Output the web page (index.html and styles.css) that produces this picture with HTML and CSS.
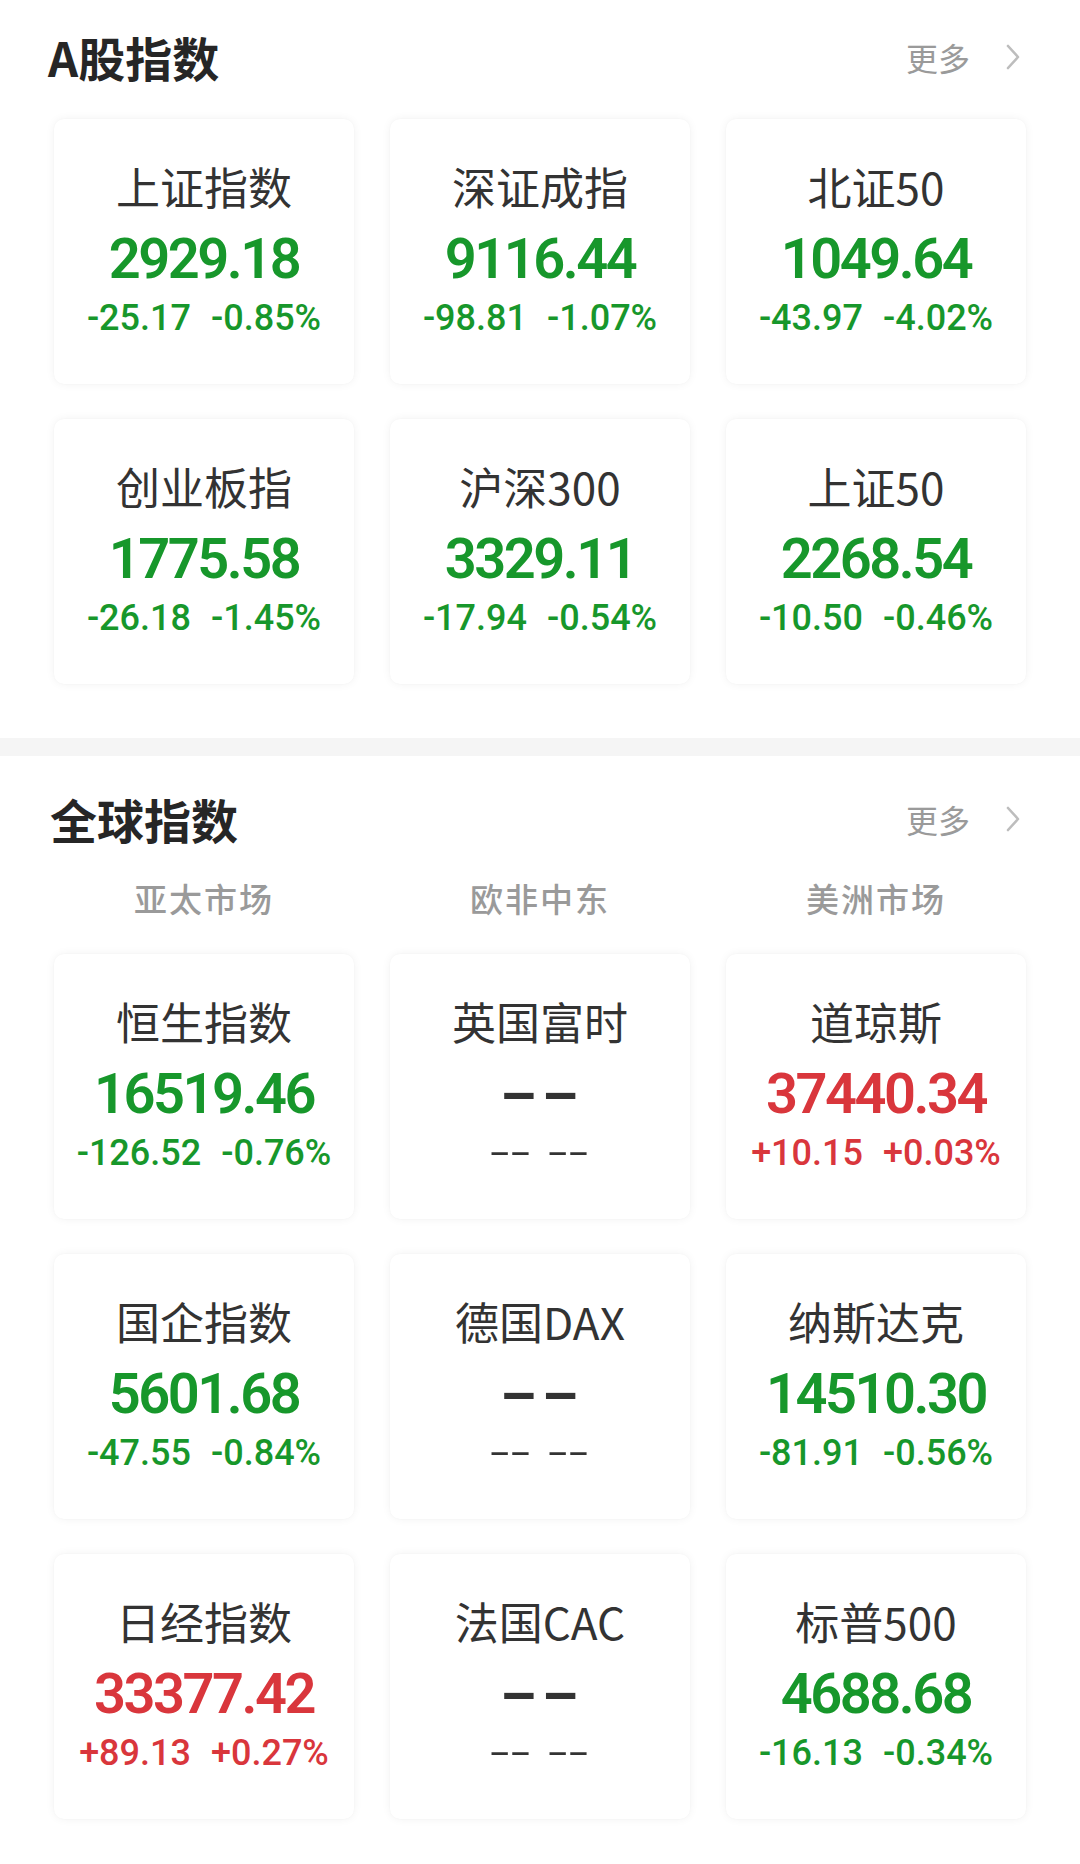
FILE: index.html
```html
<!DOCTYPE html>
<html lang="zh-CN">
<head>
<meta charset="utf-8">
<title>指数</title>
<link rel="stylesheet" href="styles.css">
</head>
<body>
<div class="page">
  <section class="section section-a">
    <div class="head">
      <h2 class="title">A股指数</h2>
      <div class="more"><span>更多</span><svg class="chev" width="14" height="26" viewBox="0 0 14 26"><polyline points="2,2 12,13 2,24" fill="none" stroke="#bdbdbd" stroke-width="2.6" stroke-linecap="round" stroke-linejoin="round"/></svg></div>
    </div>
    <div class="grid">
      <div class="card"><div class="name">上证指数</div><div class="num down">2929.18</div><div class="chg down"><span>-25.17</span><span>-0.85%</span></div></div>
      <div class="card"><div class="name">深证成指</div><div class="num down">9116.44</div><div class="chg down"><span>-98.81</span><span>-1.07%</span></div></div>
      <div class="card"><div class="name">北证50</div><div class="num down">1049.64</div><div class="chg down"><span>-43.97</span><span>-4.02%</span></div></div>
      <div class="card"><div class="name">创业板指</div><div class="num down">1775.58</div><div class="chg down"><span>-26.18</span><span>-1.45%</span></div></div>
      <div class="card"><div class="name">沪深300</div><div class="num down">3329.11</div><div class="chg down"><span>-17.94</span><span>-0.54%</span></div></div>
      <div class="card"><div class="name">上证50</div><div class="num down">2268.54</div><div class="chg down"><span>-10.50</span><span>-0.46%</span></div></div>
    </div>
  </section>
  <div class="sep"></div>
  <section class="section section-b">
    <div class="head">
      <h2 class="title">全球指数</h2>
      <div class="more"><span>更多</span><svg class="chev" width="14" height="26" viewBox="0 0 14 26"><polyline points="2,2 12,13 2,24" fill="none" stroke="#bdbdbd" stroke-width="2.6" stroke-linecap="round" stroke-linejoin="round"/></svg></div>
    </div>
    <div class="tabs">
      <div class="tab">亚太市场</div>
      <div class="tab">欧非中东</div>
      <div class="tab">美洲市场</div>
    </div>
    <div class="grid">
      <div class="card"><div class="name">恒生指数</div><div class="num down">16519.46</div><div class="chg down"><span>-126.52</span><span>-0.76%</span></div></div>
      <div class="card"><div class="name">英国富时</div><div class="num none"><span class="dash-big">--</span></div><div class="chg none"><span class="dash-small">--</span><span class="dash-small">--</span></div></div>
      <div class="card"><div class="name">道琼斯</div><div class="num up">37440.34</div><div class="chg up"><span>+10.15</span><span>+0.03%</span></div></div>
      <div class="card"><div class="name">国企指数</div><div class="num down">5601.68</div><div class="chg down"><span>-47.55</span><span>-0.84%</span></div></div>
      <div class="card"><div class="name">德国DAX</div><div class="num none"><span class="dash-big">--</span></div><div class="chg none"><span class="dash-small">--</span><span class="dash-small">--</span></div></div>
      <div class="card"><div class="name">纳斯达克</div><div class="num down">14510.30</div><div class="chg down"><span>-81.91</span><span>-0.56%</span></div></div>
      <div class="card"><div class="name">日经指数</div><div class="num up">33377.42</div><div class="chg up"><span>+89.13</span><span>+0.27%</span></div></div>
      <div class="card"><div class="name">法国CAC</div><div class="num none"><span class="dash-big">--</span></div><div class="chg none"><span class="dash-small">--</span><span class="dash-small">--</span></div></div>
      <div class="card"><div class="name">标普500</div><div class="num down">4688.68</div><div class="chg down"><span>-16.13</span><span>-0.34%</span></div></div>
    </div>
  </section>
</div>
</body>
</html>
```

FILE: styles.css
```css
* { box-sizing: border-box; }
html, body {
  margin: 0;
  padding: 0;
  background: #ffffff;
}
body {
  font-family: "Noto Sans CJK SC", "Noto Sans", sans-serif;
  color: #333333;
  width: 1080px;
  height: 1864px;
  overflow: hidden;
}
.page {
  display: flex;
  flex-direction: column;
}
.section-a {
  padding: 27px 54px 54px 54px;
}
.section-b {
  padding: 33px 54px 0 54px;
}
.head {
  display: flex;
  align-items: center;
  justify-content: space-between;
  height: 60px;
}
.title {
  margin: 0 0 0 -6px;
  font-size: 47px;
  font-weight: 700;
  line-height: 60px;
  color: #262626;
}
.section-b .title { margin-left: -4px; }
.more {
  display: flex;
  align-items: center;
  gap: 36px;
  margin-right: 6px;
  font-size: 32px;
  line-height: 60px;
  color: #9a9a9a;
}
.chev { display: block; }
.section-a .grid {
  margin-top: 32px;
}
.grid {
  display: grid;
  grid-template-columns: repeat(3, 300px);
  grid-auto-rows: 265px;
  column-gap: 36px;
  row-gap: 35px;
}
.card {
  background: #ffffff;
  border-radius: 10px;
  box-shadow: 0 0 10px rgba(0, 0, 0, 0.055), 0 0 2px rgba(0, 0, 0, 0.03);
  display: flex;
  flex-direction: column;
  align-items: center;
  padding-top: 39px;
}
.name {
  font-size: 44px;
  line-height: 56px;
  color: #333333;
  font-weight: 400;
}
.num {
  margin-top: 10px;
  font-family: Roboto, "Noto Sans", sans-serif;
  font-size: 56px;
  line-height: 70px;
  font-weight: 600;
  letter-spacing: -2.5px;
}
.chg {
  margin-top: 2px;
  display: flex;
  gap: 20px;
  font-family: Roboto, "Noto Sans", sans-serif;
  font-size: 36px;
  line-height: 44px;
  font-weight: 500;
}
.down { color: #17972b; }
.up { color: #d9363c; }
.none { color: #333333; }
.dash-big {
  display: inline-block;
  transform: scaleX(1.9);
  font-weight: 700;
  letter-spacing: 0;
}
.chg.none { gap: 36px; }
.dash-small {
  display: inline-block;
  transform: scaleX(1.9);
  font-weight: 400;
  letter-spacing: 1px;
}
.sep {
  height: 18px;
  background: #f5f5f5;
}
.tabs {
  margin-top: 27px;
  display: grid;
  grid-template-columns: repeat(3, 300px);
  column-gap: 36px;
  margin-bottom: 34px;
}
.tab {
  text-align: center;
  font-size: 33px;
  line-height: 44px;
  letter-spacing: 2px;
  font-weight: 500;
  color: #9a9a9a;
}
```
